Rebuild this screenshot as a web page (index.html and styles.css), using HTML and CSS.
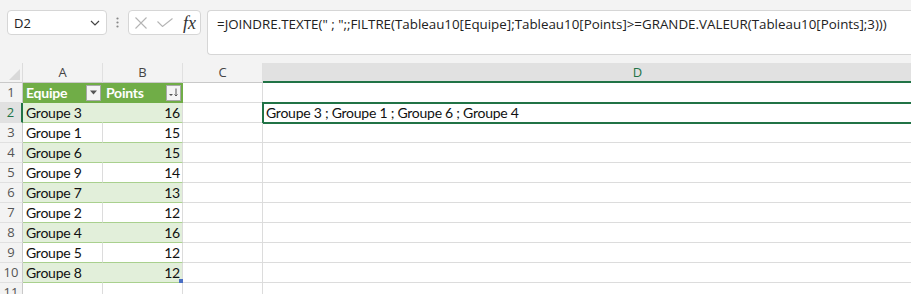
FILE: index.html
```html
<!DOCTYPE html>
<html lang="fr">
<head>
  <meta charset="UTF-8">
  <title>Classeur - Tableau10</title>
  <link rel="stylesheet" href="styles.css">
</head>
<body>
  <div class="toolbar">
    <div class="namebox">
      <span>D2</span>
      <svg width="10" height="6" viewBox="0 0 10 6"><path d="M1 1l4 4 4-4" fill="none" stroke="#444" stroke-width="1.2"/></svg>
    </div>
    <div class="grip">
      <svg width="3" height="12" viewBox="0 0 3 12"><circle cx="1.5" cy="1.5" r="1.1" fill="#888"/><circle cx="1.5" cy="5.5" r="1.1" fill="#888"/><circle cx="1.5" cy="9.5" r="1.1" fill="#888"/></svg>
    </div>
    <div class="fxbox">
      <svg class="cancel" width="12" height="12" viewBox="0 0 12 12"><path d="M0.5 0.5l11 11M11.5 0.5l-11 11" stroke="#b4b4b4" stroke-width="1.1" fill="none"/></svg>
      <svg class="enter" width="16" height="9" viewBox="0 0 16 9"><path d="M0.5 3.5l5 5 10-8" stroke="#b4b4b4" stroke-width="1.1" fill="none"/></svg>
      <span class="fx">fx</span>
    </div>
    <div class="formula">=JOINDRE.TEXTE(" ; ";;FILTRE(Tableau10[Equipe];Tableau10[Points]&gt;=GRANDE.VALEUR(Tableau10[Points];3)))</div>
  </div>

  <div class="sheet">
    <!-- column headers -->
    <div class="corner"><svg width="23" height="20" viewBox="0 0 23 20"><polygon points="20,6 20,17 9,17" fill="#d9d9d9"/></svg></div>
    <div class="ch">A</div>
    <div class="ch">B</div>
    <div class="ch">C</div>
    <div class="ch sel">D</div>

    <!-- row 1 : table header -->
    <div class="rh">1</div>
    <div class="th">
      <span>Equipe</span>
      <span class="filter"><svg width="9" height="5" viewBox="0 0 9 5"><polygon points="1,0.5 8,0.5 4.5,4.5" fill="#555"/></svg></span>
    </div>
    <div class="th">
      <span>Points</span>
      <span class="filter"><svg width="11" height="9" viewBox="0 0 11 9"><polygon points="1,6 5,6 3,8" fill="#555"/><path d="M8 0.5v7.5M6.5 6.5l1.5 1.5 1.5-1.5" stroke="#555" stroke-width="1" fill="none"/></svg></span>
    </div>
    <div class="c"></div>
    <div class="c"></div>

    <div class="rh sel">2</div>
    <div class="t a band">Groupe 3</div>
    <div class="t num band">16</div>
    <div class="c"></div>
    <div class="c active">Groupe 3 ; Groupe 1 ; Groupe 6 ; Groupe 4</div>

    <div class="rh">3</div>
    <div class="t a">Groupe 1</div>
    <div class="t num">15</div>
    <div class="c"></div>
    <div class="c"></div>

    <div class="rh">4</div>
    <div class="t a band">Groupe 6</div>
    <div class="t num band">15</div>
    <div class="c"></div>
    <div class="c"></div>

    <div class="rh">5</div>
    <div class="t a">Groupe 9</div>
    <div class="t num">14</div>
    <div class="c"></div>
    <div class="c"></div>

    <div class="rh">6</div>
    <div class="t a band">Groupe 7</div>
    <div class="t num band">13</div>
    <div class="c"></div>
    <div class="c"></div>

    <div class="rh">7</div>
    <div class="t a">Groupe 2</div>
    <div class="t num">12</div>
    <div class="c"></div>
    <div class="c"></div>

    <div class="rh">8</div>
    <div class="t a band">Groupe 4</div>
    <div class="t num band">16</div>
    <div class="c"></div>
    <div class="c"></div>

    <div class="rh">9</div>
    <div class="t a">Groupe 5</div>
    <div class="t num">12</div>
    <div class="c"></div>
    <div class="c"></div>

    <div class="rh">10</div>
    <div class="t a band">Groupe 8</div>
    <div class="t num band last">12<span class="resize"></span></div>
    <div class="c"></div>
    <div class="c"></div>

    <div class="rh">11</div>
    <div class="c"></div>
    <div class="c"></div>
    <div class="c"></div>
    <div class="c"></div>
  </div>
</body>
</html>
```

FILE: styles.css
```css
body {
  margin: 0;
  background-color: #fff;
  font-family: "Open Sans", sans-serif;
  overflow: hidden;
}

/* formula bar */
.toolbar {
  display: flex;
  align-items: flex-start;
  height: 63px;
  box-sizing: border-box;
  padding: 10px 0 0 7px;
  background-color: #f3f3f3;
}
.namebox {
  width: 100px;
  height: 25px;
  box-sizing: border-box;
  display: flex;
  align-items: center;
  justify-content: space-between;
  padding: 0 6px 0 6px;
  background-color: #fff;
  border: 1px solid #d6d6d6;
  border-radius: 4px;
  font-size: 13px;
  color: #222;
}
.grip {
  width: 21px;
  height: 25px;
  display: flex;
  align-items: center;
  justify-content: center;
}
.fxbox {
  width: 73px;
  height: 25px;
  box-sizing: border-box;
  display: flex;
  align-items: center;
  padding-left: 6px;
  background-color: #fff;
  border: 1px solid #d6d6d6;
  border-radius: 4px;
}
.fxbox .enter {
  margin-left: 10px;
}
.fxbox .fx {
  margin-left: 10px;
  font-family: "Liberation Serif", serif;
  font-style: italic;
  font-size: 18px;
  color: #333;
  line-height: 20px;
}
.formula {
  flex: 1;
  height: 45px;
  box-sizing: border-box;
  margin-left: 6px;
  padding: 3px 0 0 9px;
  background-color: #fff;
  border: 1px solid #d6d6d6;
  border-right: none;
  border-radius: 4px 0 0 4px;
  font-size: 13.35px;
  line-height: 20px;
  color: #222;
  white-space: nowrap;
  overflow: hidden;
}

/* grid */
.sheet {
  display: grid;
  grid-template-columns: 23px 80px 80px 80px 750px;
  grid-auto-rows: 20px;
  font-family: Lato, "Liberation Sans", sans-serif;
  font-size: 14px;
  letter-spacing: -0.25px;
  color: #111;
}
.sheet > div {
  box-sizing: border-box;
  border-right: 1px solid #dcdcdc;
  border-bottom: 1px solid #dcdcdc;
  padding: 0 3px;
  line-height: 19px;
  white-space: nowrap;
}
.sheet > .corner {
  padding: 0;
  background-color: #f3f3f3;
  border-bottom-color: #c9c9c9;
}
.corner svg {
  display: block;
}
.sheet > .ch {
  background-color: #f3f3f3;
  border-right-color: #e0e0e0;
  border-bottom-color: #c9c9c9;
  text-align: center;
  font-family: "Open Sans", sans-serif;
  font-size: 13px;
  letter-spacing: 0;
  color: #444;
}
.sheet > .ch.sel {
  background-color: #e1e1e1;
  color: #217346;
  border-bottom: 2px solid #217346;
}
.sheet > .rh {
  padding: 0;
  background-color: #f3f3f3;
  border-right-color: #c9c9c9;
  border-bottom-color: #e0e0e0;
  text-align: center;
  font-family: "Open Sans", sans-serif;
  font-size: 13px;
  letter-spacing: 0;
  color: #555;
}
.sheet > .rh.sel {
  background-color: #e1e1e1;
  color: #217346;
  border-right: 2px solid #217346;
}

/* table */
.sheet > .th {
  display: flex;
  align-items: center;
  justify-content: space-between;
  padding: 0 1px 0 3px;
  background-color: #70ad47;
  border-color: #70ad47;
  color: #fff;
  font-weight: bold;
}
.filter {
  width: 15px;
  height: 16px;
  box-sizing: border-box;
  display: flex;
  align-items: center;
  justify-content: center;
  background-color: #f4f4f4;
  border: 1px solid #a8a8a8;
}
.sheet > .t {
  border-bottom-color: #a9d08e;
}
.sheet > .band {
  background-color: #e2efda;
}
.sheet > .a.band {
  border-right-color: #e2efda;
}
.sheet > .num {
  text-align: right;
  padding-right: 2px;
}
.sheet > .last {
  position: relative;
}
.resize {
  position: absolute;
  right: -1px;
  bottom: -1px;
  width: 4px;
  height: 4px;
  background-color: #4a6fc4;
}
.sheet > .active {
  outline: 2px solid #217346;
  outline-offset: -1px;
}
```
